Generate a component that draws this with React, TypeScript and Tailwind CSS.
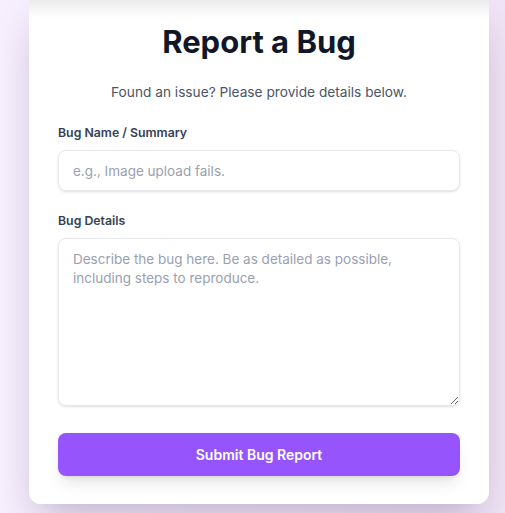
import React from "react";

const App = () => {
  return (
    <div
      className="min-h-screen w-full bg-gradient-to-r from-[#f6effd] to-[#f0e4f6] pb-2"
      style={{ fontFamily: "Inter, 'Noto Sans', sans-serif" }}
    >
      <div className="ml-[29px] w-[460px] rounded-b-xl bg-[linear-gradient(to_bottom,#ebebeb,#ffffff_18px)] px-[29px] pb-[28px] pt-[22px] shadow-[0_20px_40px_-10px_rgba(90,60,110,0.35)]">
        <h1 className="text-center text-[31px] font-bold leading-[40px] text-gray-900">
          Report a Bug
        </h1>
        <p className="mt-[20px] text-center text-[13.7px] leading-[20px] text-gray-600">
          Found an issue? Please provide details below.
        </p>

        <form className="mt-[23px]" onSubmit={(e) => e.preventDefault()}>
          <label className="block text-[12.3px] font-semibold leading-[16px] text-gray-700">
            Bug Name / Summary
          </label>
          <input
            type="text"
            placeholder="e.g., Image upload fails."
            className="mt-[9px] block h-[41px] w-full rounded-lg border border-gray-200 px-[14px] text-[13.5px] text-gray-800 shadow-sm outline-none placeholder:text-gray-400"
          />

          <label className="mt-[22px] block text-[12.3px] font-semibold leading-[16px] text-gray-700">
            Bug Details
          </label>
          <textarea
            placeholder="Describe the bug here. Be as detailed as possible, including steps to reproduce."
            className="mt-[9px] block h-[168px] w-full rounded-lg border border-gray-200 px-[14px] py-[11px] text-[13.5px] leading-[19px] text-gray-800 shadow-sm outline-none placeholder:text-gray-400"
          />

          <button
            type="submit"
            className="mt-[27px] h-[43px] w-full rounded-lg bg-[#9655fc] text-[14px] font-semibold text-white shadow-lg"
          >
            Submit Bug Report
          </button>
        </form>
      </div>
    </div>
  );
};

export default App;
